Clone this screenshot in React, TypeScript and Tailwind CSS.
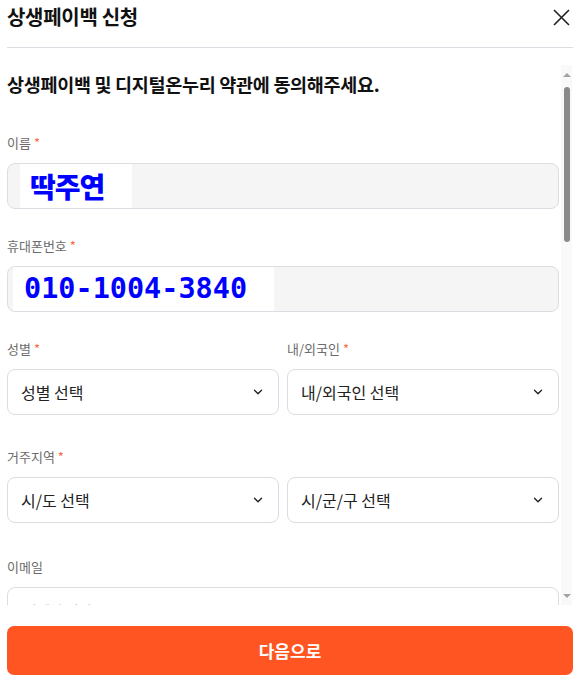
import { ChevronDown } from "lucide-react";

const Star = () => <span className="ml-[3px] text-[#ff6a4a]">*</span>;

const Label = ({ text, required }: { text: string; required?: boolean }) => (
  <div className="h-[18px] text-[13px] leading-[18px] text-[#6b6b6b]">
    {text}
    {required && <Star />}
  </div>
);

const SelectBox = ({ text }: { text: string }) => (
  <div className="mt-[11px] h-[46px] flex items-center justify-between rounded-[8px] border border-[#dcdde3] bg-white pl-[13px] pr-[13px]">
    <span className="text-[16px] text-[#222]">{text}</span>
    <ChevronDown size={14} strokeWidth={2.4} className="text-[#222]" />
  </div>
);

const Scrollbar = () => (
  <div className="w-[11px] flex flex-col items-center bg-[#f9f9f9]">
    <div className="mt-[8px] h-0 w-0 border-x-[4px] border-b-[4px] border-x-transparent border-b-[#a3a3a3]" />
    <div className="mt-[10px] h-[155px] w-[6px] rounded-full bg-[#8a8a8a]" />
    <div className="flex-1" />
    <div className="mb-[7px] h-0 w-0 border-x-[4px] border-t-[4px] border-x-transparent border-t-[#a3a3a3]" />
  </div>
);

export default function App() {
  return (
    <div className="w-[580px] h-[679px] bg-white flex flex-col overflow-hidden font-['Noto_Sans_CJK_KR',sans-serif]">
      {/* header */}
      <div className="h-[34px] flex items-center justify-between pl-[7px] pr-[10px]">
        <h1 className="text-[20px] font-bold text-[#111] tracking-[-0.3px]">상생페이백 신청</h1>
        <svg width="17" height="17" viewBox="0 0 17 17" className="text-[#222]">
          <path d="M1 1 L16 16 M16 1 L1 16" stroke="currentColor" strokeWidth="1.6" fill="none" />
        </svg>
      </div>
      <div className="mt-[13px] mx-[7px] h-px bg-[#dcdde3]" />

      {/* scroll area */}
      <div className="mt-[17px] h-[540px] flex pl-[7px] pr-[8px]">
        <div className="flex-1 overflow-hidden pr-[2px]">
          <h2 className="pt-[7px] text-[18.5px] leading-[24px] font-bold text-[#111] tracking-[-0.3px]">
            상생페이백 및 디지털온누리 약관에 동의해주세요.
          </h2>

          <div className="mt-[38px]">
            <Label text="이름" required />
            <div className="mt-[11px] h-[46px] flex rounded-[8px] border border-[#dcdde3] bg-[#f5f5f5] pl-[12px]">
              <div className="h-full w-[112px] bg-white flex items-center pl-[10px]">
                <span className="text-[28px] font-black text-[#0000ff] tracking-[-1px]">딱주연</span>
              </div>
            </div>
          </div>

          <div className="mt-[28px]">
            <Label text="휴대폰번호" required />
            <div className="mt-[11px] h-[46px] flex rounded-[8px] border border-[#dcdde3] bg-[#f5f5f5] pl-[5px]">
              <div className="h-full w-[261px] bg-white flex items-center pl-[11px]">
                <span className="font-['DejaVu_Sans_Mono',monospace] text-[28.5px] font-bold text-[#0000ff]">010-1004-3840</span>
              </div>
            </div>
          </div>

          <div className="mt-[28px] grid grid-cols-2 gap-x-[8px]">
            <div>
              <Label text="성별" required />
              <SelectBox text="성별 선택" />
            </div>
            <div>
              <Label text="내/외국인" required />
              <SelectBox text="내/외국인 선택" />
            </div>
          </div>

          <div className="mt-[33px]">
            <Label text="거주지역" required />
            <div className="grid grid-cols-2 gap-x-[8px]">
              <SelectBox text="시/도 선택" />
              <SelectBox text="시/군/구 선택" />
            </div>
          </div>

          <div className="mt-[35px]">
            <Label text="이메일" />
            <div className="mt-[11px] h-[46px] flex items-center rounded-[8px] border border-[#dcdde3] bg-white pl-[16px]">
              <span className="text-[14px] text-[#aaa]">이메일 입력</span>
            </div>
          </div>
        </div>
        <Scrollbar />
      </div>

      {/* footer */}
      <div className="px-[7px] pt-[21px]">
        <button
          type="button"
          className="w-full h-[49px] rounded-[7px] bg-[#ff5522] text-white text-[17px] font-bold"
        >
          다음으로
        </button>
      </div>
    </div>
  );
}
